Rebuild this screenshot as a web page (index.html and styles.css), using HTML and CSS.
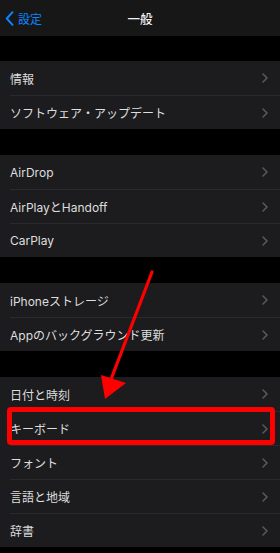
FILE: index.html
```html
<!DOCTYPE html>
<html lang="ja">
<head>
<meta charset="utf-8">
<link rel="stylesheet" href="styles.css">
</head>
<body>
<div class="screen">
  <header class="nav">
    <div class="back">
      <svg class="back-icon" width="9" height="15" viewBox="0 0 9 15"><path d="M7.5 1.2 L1.8 7.5 L7.5 13.8" fill="none" stroke="#0a84ff" stroke-width="2" stroke-linecap="round" stroke-linejoin="round"/></svg>
      <span>設定</span>
    </div>
    <div class="title">一般</div>
  </header>

  <section class="group">
    <div class="row"><div class="row-inner"><span>情報</span><svg class="chev" width="6" height="10" viewBox="0 0 6 10"><path d="M1 1 L5 5 L1 9" fill="none" stroke="#5a5a5f" stroke-width="1.5" stroke-linecap="round" stroke-linejoin="round"/></svg></div></div>
    <div class="row"><div class="row-inner"><span>ソフトウェア・アップデート</span><svg class="chev" width="6" height="10" viewBox="0 0 6 10"><path d="M1 1 L5 5 L1 9" fill="none" stroke="#5a5a5f" stroke-width="1.5" stroke-linecap="round" stroke-linejoin="round"/></svg></div></div>
  </section>

  <section class="group">
    <div class="row"><div class="row-inner"><span>AirDrop</span><svg class="chev" width="6" height="10" viewBox="0 0 6 10"><path d="M1 1 L5 5 L1 9" fill="none" stroke="#5a5a5f" stroke-width="1.5" stroke-linecap="round" stroke-linejoin="round"/></svg></div></div>
    <div class="row"><div class="row-inner"><span>AirPlayとHandoff</span><svg class="chev" width="6" height="10" viewBox="0 0 6 10"><path d="M1 1 L5 5 L1 9" fill="none" stroke="#5a5a5f" stroke-width="1.5" stroke-linecap="round" stroke-linejoin="round"/></svg></div></div>
    <div class="row"><div class="row-inner"><span>CarPlay</span><svg class="chev" width="6" height="10" viewBox="0 0 6 10"><path d="M1 1 L5 5 L1 9" fill="none" stroke="#5a5a5f" stroke-width="1.5" stroke-linecap="round" stroke-linejoin="round"/></svg></div></div>
  </section>

  <section class="group">
    <div class="row"><div class="row-inner"><span>iPhoneストレージ</span><svg class="chev" width="6" height="10" viewBox="0 0 6 10"><path d="M1 1 L5 5 L1 9" fill="none" stroke="#5a5a5f" stroke-width="1.5" stroke-linecap="round" stroke-linejoin="round"/></svg></div></div>
    <div class="row"><div class="row-inner"><span>Appのバックグラウンド更新</span><svg class="chev" width="6" height="10" viewBox="0 0 6 10"><path d="M1 1 L5 5 L1 9" fill="none" stroke="#5a5a5f" stroke-width="1.5" stroke-linecap="round" stroke-linejoin="round"/></svg></div></div>
  </section>

  <section class="group">
    <div class="row"><div class="row-inner"><span>日付と時刻</span><svg class="chev" width="6" height="10" viewBox="0 0 6 10"><path d="M1 1 L5 5 L1 9" fill="none" stroke="#5a5a5f" stroke-width="1.5" stroke-linecap="round" stroke-linejoin="round"/></svg></div></div>
    <div class="row"><div class="row-inner"><span>キーボード</span><svg class="chev" width="6" height="10" viewBox="0 0 6 10"><path d="M1 1 L5 5 L1 9" fill="none" stroke="#5a5a5f" stroke-width="1.5" stroke-linecap="round" stroke-linejoin="round"/></svg></div></div>
    <div class="row"><div class="row-inner"><span>フォント</span><svg class="chev" width="6" height="10" viewBox="0 0 6 10"><path d="M1 1 L5 5 L1 9" fill="none" stroke="#5a5a5f" stroke-width="1.5" stroke-linecap="round" stroke-linejoin="round"/></svg></div></div>
    <div class="row"><div class="row-inner"><span>言語と地域</span><svg class="chev" width="6" height="10" viewBox="0 0 6 10"><path d="M1 1 L5 5 L1 9" fill="none" stroke="#5a5a5f" stroke-width="1.5" stroke-linecap="round" stroke-linejoin="round"/></svg></div></div>
    <div class="row"><div class="row-inner"><span>辞書</span><svg class="chev" width="6" height="10" viewBox="0 0 6 10"><path d="M1 1 L5 5 L1 9" fill="none" stroke="#5a5a5f" stroke-width="1.5" stroke-linecap="round" stroke-linejoin="round"/></svg></div></div>
  </section>

  <div class="highlight"></div>
  <svg class="arrow" width="280" height="553" viewBox="0 0 280 553">
    <line x1="152" y1="272" x2="110" y2="382" stroke="#ff0000" stroke-width="3.2" stroke-linecap="round"/>
    <polygon points="101,375 126,383 105,399" fill="#ff0000"/>
  </svg>
</div>
</body>
</html>
```

FILE: styles.css
```css
* { box-sizing: border-box; }
html, body {
  margin: 0;
  padding: 0;
  background: #000;
}
body {
  font-family: Inter, "Noto Sans CJK JP", sans-serif;
  color: #dedede;
  font-size: 12px;
}
.screen {
  position: relative;
  width: 280px;
  height: 553px;
  overflow: hidden;
  background: #000;
}
.nav {
  position: relative;
  height: 36px;
  background: #171717;
  display: flex;
  align-items: center;
  justify-content: center;
}
.back {
  position: absolute;
  left: 5px;
  top: 0;
  height: 36px;
  display: flex;
  align-items: center;
  gap: 4px;
  color: #0a84ff;
  font-size: 12px;
}
.title {
  color: #f2f2f2;
  font-size: 12.5px;
  font-weight: 500;
}
.group {
  margin-top: 26px;
  background: #1c1c1e;
}
.nav + .group { margin-top: 25px; }
.row {
  height: 34px;
  padding-left: 10px;
  display: flex;
}
.row-inner {
  flex: 1;
  display: flex;
  align-items: center;
  justify-content: space-between;
  padding-right: 12px;
  border-top: 1px solid #2a2a2c;
}
.row:first-child .row-inner { border-top: none; }
.chev { display: block; }
.highlight {
  position: absolute;
  left: 7px;
  top: 407px;
  width: 268px;
  height: 38px;
  border: 5px solid #ff0000;
  border-radius: 4px;
}
.arrow {
  position: absolute;
  left: 0;
  top: 0;
}
```
